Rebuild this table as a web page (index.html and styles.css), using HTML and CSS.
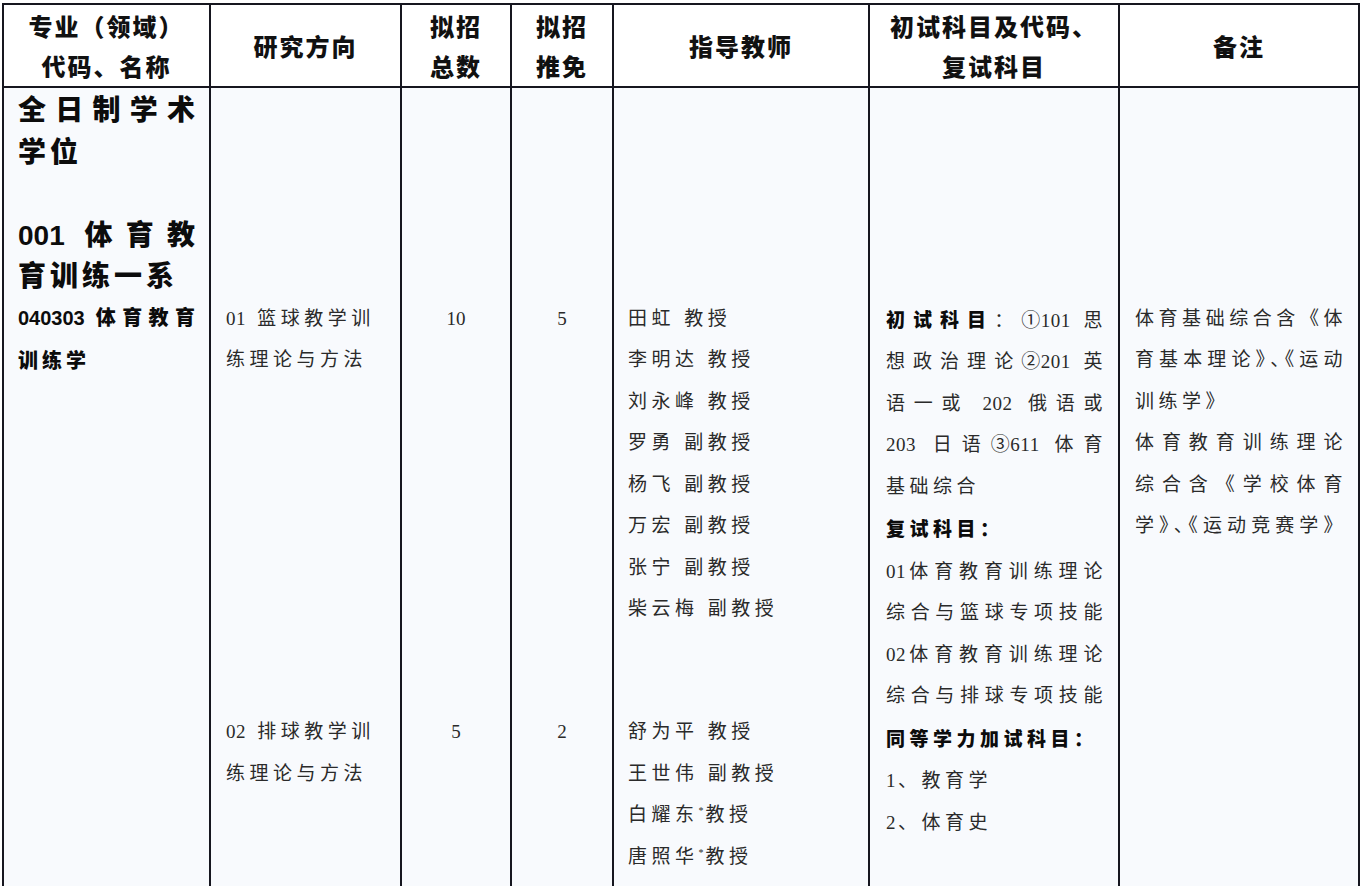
FILE: index.html
```html
<!DOCTYPE html>
<html lang="zh-CN">
<head>
<meta charset="utf-8">
<title>招生专业目录</title>
<link rel="stylesheet" href="styles.css">
</head>
<body>
<table class="plan">
  <colgroup>
    <col class="w1"><col class="w2"><col class="w3"><col class="w4"><col class="w5"><col class="w6"><col class="w7">
  </colgroup>
  <thead>
    <tr>
      <th>专业（领域）<br>代码、名称</th>
      <th>研究方向</th>
      <th>拟招<br>总数</th>
      <th>拟招<br>推免</th>
      <th>指导教师</th>
      <th>初试科目及代码、<br>复试科目</th>
      <th>备注</th>
    </tr>
  </thead>
  <tbody>
    <tr class="r1">
      <td rowspan="2" class="major">
        <div class="big j">全日制学术</div>
        <div class="big">学位</div>
        <div class="big blank"></div>
        <div class="big j"><span class="snum">001</span> 体育教</div>
        <div class="big">育训练一系</div>
        <div class="mid j"><span class="snum">040303</span> 体育教育</div>
        <div class="mid">训练学</div>
      </td>
      <td class="dir top">
        <div><span class="d">01</span> 篮球教学训</div>
        <div>练理论与方法</div>
      </td>
      <td class="num top"><div>10</div></td>
      <td class="num top"><div>5</div></td>
      <td class="tutor top">
        <div>田虹 教授</div>
        <div>李明达 教授</div>
        <div>刘永峰 教授</div>
        <div>罗勇 副教授</div>
        <div>杨飞 副教授</div>
        <div>万宏 副教授</div>
        <div>张宁 副教授</div>
        <div>柴云梅 副教授</div>
      </td>
      <td rowspan="2" class="exam top">
        <div class="j"><b>初试科目</b>：<span class="cn">①101</span> 思</div>
        <div class="j">想政治理论<span class="cn">②201</span> 英</div>
        <div class="j">语一或 <span class="d">202</span> 俄语或</div>
        <div class="j"><span class="d">203</span> 日语<span class="cn">③611</span> 体育</div>
        <div>基础综合</div>
        <div><b>复试科目：</b></div>
        <div class="j"><span class="d">01</span>体育教育训练理论</div>
        <div class="j">综合与篮球专项技能</div>
        <div class="j"><span class="d">02</span>体育教育训练理论</div>
        <div class="j">综合与排球专项技能</div>
        <div><b>同等学力加试科目：</b></div>
        <div><span class="d">1</span>、教育学</div>
        <div><span class="d">2</span>、体育史</div>
      </td>
      <td rowspan="2" class="note top">
        <div class="j">体育基础综合含《体</div>
        <div class="j">育基本理论<span class="h">》、《</span>运动</div>
        <div>训练学》</div>
        <div class="j">体育教育训练理论</div>
        <div class="j">综合含《学校体育</div>
        <div class="j">学<span class="h">》、《</span>运动竞赛学》</div>
      </td>
    </tr>
    <tr class="r2">
      <td class="dir">
        <div><span class="d">02</span> 排球教学训</div>
        <div>练理论与方法</div>
      </td>
      <td class="num"><div>5</div></td>
      <td class="num"><div>2</div></td>
      <td class="tutor">
        <div>舒为平 教授</div>
        <div>王世伟 副教授</div>
        <div>白耀东<span class="star">*</span>教授</div>
        <div>唐照华<span class="star">*</span>教授</div>
      </td>
    </tr>
  </tbody>
</table>
</body>
</html>
```

FILE: styles.css
```css
html, body {
  margin: 0;
  padding: 0;
  background: #ffffff;
}

body {
  width: 1366px;
  height: 886px;
  overflow: hidden;
  font-family: "Liberation Serif", "Noto Sans CJK SC", serif;
  color: #2a2a2a;
}

.plan {
  border-collapse: collapse;
  table-layout: fixed;
  width: 1358px;
  margin: 3px 0 0 2px;
}

.w1 { width: 207px; }
.w2 { width: 191px; }
.w3 { width: 110px; }
.w4 { width: 102px; }
.w5 { width: 256px; }
.w6 { width: 250px; }
.w7 { width: 240px; }

.plan th,
.plan td {
  border: 2px solid #16161f;
  padding: 0;
}

.plan th {
  height: 81px;
  background: #ffffff;
  font-family: "Noto Sans CJK SC", sans-serif;
  font-weight: 900;
  font-size: 24px;
  line-height: 40px;
  letter-spacing: 2px;
  color: #111111;
  text-align: center;
  vertical-align: middle;
}

.plan td {
  vertical-align: top;
  background: #f8fafd;
  font-size: 19px;
  line-height: 41.5px;
  letter-spacing: 4.5px;
  white-space: nowrap;
}

.r1 { height: 624px; }
.r2 { height: 230px; }
.r1 td { border-bottom: none; }
.r2 td { border-top: none; }

.plan td.top { padding-top: 209.5px; }

.j {
  text-align: justify;
  text-align-last: justify;
}

b {
  font-family: "Noto Sans CJK SC", sans-serif;
  font-weight: 900;
  color: #0c0c0c;
}

.d {
  letter-spacing: 0.5px;
  margin-right: 2px;
}

.cn {
  display: inline-block;
  letter-spacing: 0.5px;
}

.major {
  padding: 0 10px 0 14px !important;
  font-family: "Noto Sans CJK SC", sans-serif;
  font-weight: 900;
  color: #0c0c0c;
}

.big {
  font-size: 28px;
  letter-spacing: 4px;
  height: 41.5px;
}

.mid {
  font-size: 20px;
  letter-spacing: 4px;
}

.snum {
  font-family: "Liberation Sans", sans-serif;
  font-weight: 700;
  letter-spacing: 0;
}

.dir { padding-left: 15px !important; }

.num {
  text-align: center;
  letter-spacing: 0 !important;
}

.tutor { padding-left: 14px !important; }

.exam { padding-left: 16px !important; padding-right: 11px !important; }

.note { padding-left: 15px !important; padding-right: 11px !important; }

.h {
  font-feature-settings: "halt";
}

.star {
  font-size: 10px;
  letter-spacing: 0;
  vertical-align: 7px;
  line-height: 0;
  margin-right: 2px;
}
```
